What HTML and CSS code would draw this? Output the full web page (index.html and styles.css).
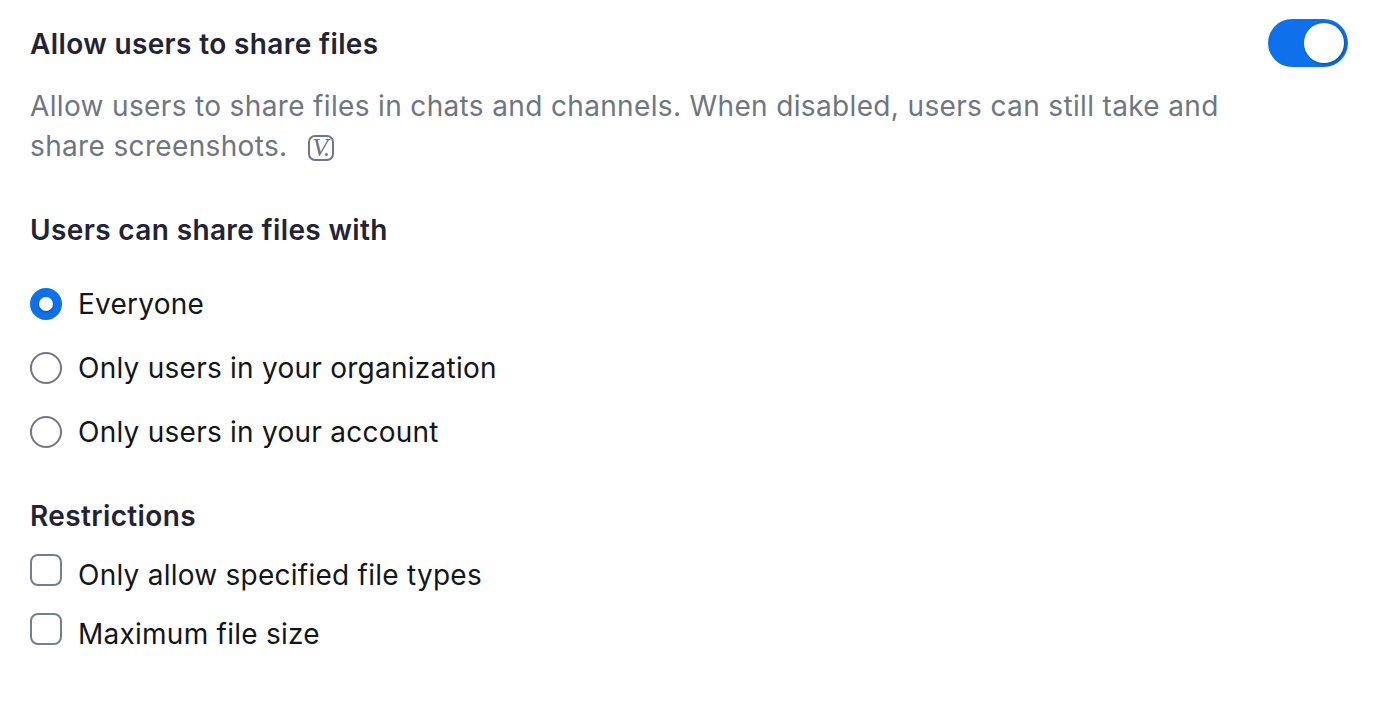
FILE: index.html
```html
<!DOCTYPE html>
<html lang="en">
<head>
    <meta charset="UTF-8">
    <title>Allow users to share files</title>
    <link rel="stylesheet" href="styles.css">
</head>
<body>
    <div class="setting-head">
        <h2 class="setting-title">Allow users to share files</h2>
        <span class="toggle"><span class="toggle-knob"></span></span>
    </div>
    <p class="description">Allow users to share files in chats and channels. When disabled, users can still take and share screenshots. <span class="version-tag">V.</span></p>

    <h3 class="group-title">Users can share files with</h3>
    <div class="radio-list">
        <div class="option"><span class="radio checked"></span>Everyone</div>
        <div class="option"><span class="radio"></span>Only users in your organization</div>
        <div class="option"><span class="radio"></span>Only users in your account</div>
    </div>

    <h3 class="group-title restrictions">Restrictions</h3>
    <div class="check-list">
        <div class="option"><span class="checkbox"></span>Only allow specified file types</div>
        <div class="option"><span class="checkbox"></span>Maximum file size</div>
    </div>
</body>
</html>
```

FILE: styles.css
```css
body {
    margin: 0;
    padding: 18px 28px 0 30px;
    font-family: Inter, "Liberation Sans", sans-serif;
    background-color: #fff;
    color: #131619;
}
.setting-head {
    display: flex;
    justify-content: space-between;
    align-items: center;
    height: 52px;
}
.setting-title,
.group-title {
    margin: 0;
    font-size: 28px;
    line-height: 40px;
    font-weight: 600;
    letter-spacing: 0.37px;
    color: #232333;
}
.toggle {
    display: block;
    width: 80px;
    height: 48px;
    margin-top: -2px;
    padding: 4px;
    box-sizing: border-box;
    border-radius: 24px;
    background-color: #0e71eb;
}
.toggle-knob {
    display: block;
    width: 40px;
    height: 40px;
    margin-left: 32px;
    border-radius: 50%;
    background-color: #fff;
    box-shadow: 1px 1px 3px rgba(0,0,0,0.35);
}
.description {
    width: 1230px;
    margin: 16px 0 0;
    font-size: 28px;
    line-height: 40px;
    letter-spacing: 0.35px;
    color: #6e7680;
}
.version-tag {
    display: inline-block;
    width: 26px;
    height: 26px;
    margin-left: 12px;
    box-sizing: border-box;
    border: 2px solid #6e7680;
    border-radius: 7px;
    font-family: "Liberation Serif", serif;
    font-style: italic;
    font-size: 26px;
    line-height: 21px;
    letter-spacing: -1px;
    text-align: center;
    vertical-align: 0;
}
.group-title {
    margin-top: 44px;
}
.radio-list {
    margin-top: 22px;
}
.option {
    display: flex;
    align-items: center;
    gap: 16px;
    font-size: 28px;
    letter-spacing: 0.25px;
}
.radio-list .option {
    height: 64px;
}
.radio {
    display: flex;
    align-items: center;
    justify-content: center;
    width: 32px;
    height: 32px;
    box-sizing: border-box;
    border: 2px solid #747487;
    border-radius: 50%;
}
.radio.checked {
    border-color: #0e71eb;
    background-color: #0e71eb;
}
.radio.checked::after {
    content: "";
    width: 14px;
    height: 14px;
    border-radius: 50%;
    background-color: #fff;
    box-shadow: 0 1px 2px rgba(0,0,0,0.4);
}
.restrictions {
    margin-top: 32px;
}
.check-list {
    margin-top: 9px;
}
.check-list .option {
    height: 59px;
}
.checkbox {
    width: 32px;
    height: 32px;
    box-sizing: border-box;
    border: 2px solid #747f8d;
    border-radius: 8px;
    margin-top: -9px;
}
```
